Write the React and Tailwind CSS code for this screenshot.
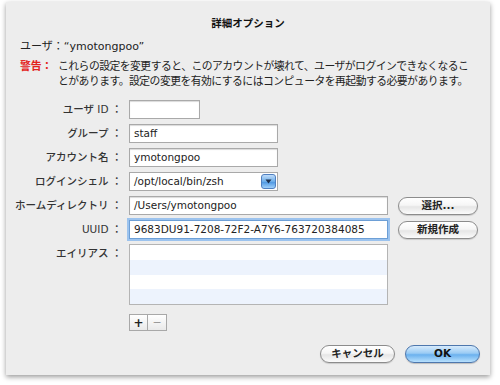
import React from 'react'

const font = { fontFamily: '"DejaVu Sans", "Noto Sans CJK JP", sans-serif' }

const aqua =
  'rounded-full border border-[#8c8c8c] bg-[linear-gradient(to_bottom,#ffffff_0%,#f6f6f6_45%,#e6e6e6_55%,#fbfbfb_100%)] shadow-[0_1px_1px_rgba(0,0,0,0.15)] text-[10.5px] font-semibold text-[#222] flex items-center justify-center'

function Label({ children }) {
  return (
    <div className="h-[19px] flex items-center justify-end text-[10.5px] font-medium text-[#333] whitespace-nowrap">
      {children}
      <span className="ml-[3px]">：</span>
    </div>
  )
}

function Field({ width, value, focused }) {
  return (
    <div
      className={`h-[19px] flex items-center bg-white px-[4px] text-[10.5px] text-[#222] ${
        focused
          ? 'border border-[#6d9fd6] shadow-[0_0_0_2px_#9cc3ee]'
          : 'border border-[#a9a9a9] shadow-[inset_0_1px_1px_rgba(0,0,0,0.15)]'
      }`}
      style={{ width }}
    >
      {value}
    </div>
  )
}

export default function App() {
  return (
    <div className="w-[500px] h-[385px] bg-white pt-[2px] pl-[6px]" style={font}>
      <div className="w-[484px] h-[373px] bg-[#ededed] shadow-[0_2px_5px_rgba(0,0,0,0.4)] flex flex-col px-[14px]">
        <div className="pt-[14px] text-center text-[10.5px] font-bold text-[#111] leading-[14px]">
          詳細オプション
        </div>

        <div className="mt-[10px] text-[11px] leading-[14px] text-[#222]">
          ユーザ：“ymotongpoo”
        </div>

        <div className="mt-[5px] flex text-[10.8px] leading-[15px] text-[#222]">
          <span className="text-[#e3231c] font-semibold whitespace-nowrap w-[38px] shrink-0">警告：</span>
          <div className="whitespace-nowrap tracking-[-0.5px]">
            <div>これらの設定を変更すると、このアカウントが壊れて、ユーザがログインできなくなるこ</div>
            <div>とがあります。設定の変更を有効にするにはコンピュータを再起動する必要があります。</div>
          </div>
        </div>

        <div className="mt-[11px] grid grid-cols-[102px_auto] gap-x-[7px] gap-y-[5px]">
          <Label>ユーザ ID</Label>
          <Field width={71} value="" />

          <Label>グループ</Label>
          <Field width={149} value="staff" />

          <Label>アカウント名</Label>
          <Field width={149} value="ymotongpoo" />

          <Label>ログインシェル</Label>
          <div className="w-[149px] h-[19px] flex items-center justify-between bg-white border border-[#a9a9a9] pl-[4px] pr-[1px] text-[10.5px] text-[#222]">
            <span>/opt/local/bin/zsh</span>
            <div className="w-[15px] h-[15px] rounded-[3px] border border-[#4f7fc0] bg-[linear-gradient(to_bottom,#bfdcfa_0%,#6eaee9_50%,#4f98e2_55%,#9fd0fb_100%)] flex items-center justify-center">
              <svg width="7" height="5" viewBox="0 0 7 5">
                <path d="M0.5 0.5 L6.5 0.5 L3.5 4.5 Z" fill="#1d2f4d" />
              </svg>
            </div>
          </div>

          <Label>ホームディレクトリ</Label>
          <div className="flex items-center gap-[10px]">
            <Field width={259} value="/Users/ymotongpoo" />
            <button className={`${aqua} w-[80px] h-[18px]`}>選択...</button>
          </div>

          <Label>UUID</Label>
          <div className="flex items-center gap-[10px]">
            <Field width={259} value="9683DU91-7208-72F2-A7Y6-763720384085" focused />
            <button className={`${aqua} w-[80px] h-[18px]`}>新規作成</button>
          </div>

          <Label>エイリアス</Label>
          <div>
            <div className="w-[259px] h-[61px] border border-[#b4b4b4] flex flex-col">
              <div className="h-[15px] bg-white" />
              <div className="h-[15px] bg-[#edf3fd]" />
              <div className="h-[15px] bg-white" />
              <div className="h-[15px] bg-[#edf3fd]" />
            </div>
            <div className="mt-[9px] flex w-fit border border-[#a8a8a8] bg-[linear-gradient(to_bottom,#ffffff,#e9e9e9)]">
              <div className="w-[18px] h-[15px] flex items-center justify-center border-r border-[#a8a8a8] text-[12px] font-bold text-[#222] leading-none">
                +
              </div>
              <div className="w-[18px] h-[15px] flex items-center justify-center text-[11px] text-[#9a9a9a] leading-none">
                −
              </div>
            </div>
          </div>
        </div>

        <div className="mt-auto mb-[12px] flex justify-end gap-[10px] -mr-[4px]">
          <button className={`${aqua} w-[75px] h-[18px]`}>キャンセル</button>
          <button className="w-[75px] h-[18px] rounded-full border border-[#4e77ad] bg-[linear-gradient(to_bottom,#d7ebfc_0%,#9acbf4_45%,#6bb1ee_55%,#b8e0fd_100%)] shadow-[0_1px_1px_rgba(0,0,0,0.2)] text-[10.5px] font-bold text-[#111] flex items-center justify-center">
            OK
          </button>
        </div>
      </div>
    </div>
  )
}
